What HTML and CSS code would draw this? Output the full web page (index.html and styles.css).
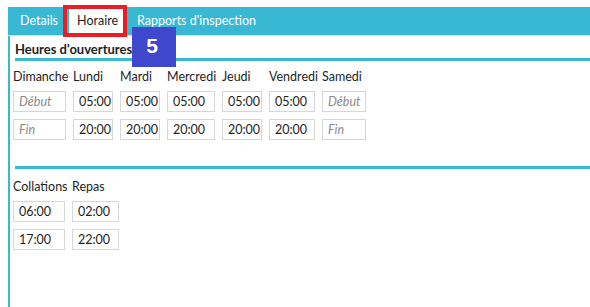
FILE: index.html
```html
<!DOCTYPE html>
<html lang="fr">
<head>
    <meta charset="UTF-8">
    <meta name="viewport" content="width=device-width, initial-scale=1.0">
    <title>Horaire</title>
    <link rel="stylesheet" href="styles.css">
</head>
<body>

    <div class="tabs">
        <div class="tab">Details</div>
        <div class="tab active">Horaire</div>
        <div class="tab">Rapports d'inspection</div>
    </div>

    <div class="panel">
        <div class="section-title">Heures d'ouvertures</div>
        <div class="rule"></div>

        <div class="week">
            <div class="day">Dimanche</div>
            <div class="day">Lundi</div>
            <div class="day">Mardi</div>
            <div class="day">Mercredi</div>
            <div class="day">Jeudi</div>
            <div class="day">Vendredi</div>
            <div class="day">Samedi</div>

            <input class="field" type="text" placeholder="Début">
            <input class="field" type="text" value="05:00">
            <input class="field" type="text" value="05:00">
            <input class="field" type="text" value="05:00">
            <input class="field" type="text" value="05:00">
            <input class="field" type="text" value="05:00">
            <input class="field" type="text" placeholder="Début">

            <input class="field" type="text" placeholder="Fin">
            <input class="field" type="text" value="20:00">
            <input class="field" type="text" value="20:00">
            <input class="field" type="text" value="20:00">
            <input class="field" type="text" value="20:00">
            <input class="field" type="text" value="20:00">
            <input class="field" type="text" placeholder="Fin">
        </div>

        <div class="rule rule-low"></div>

        <div class="meals">
            <div class="day">Collations</div>
            <div class="day">Repas</div>
            <input class="field" type="text" value="06:00">
            <input class="field" type="text" value="02:00">
            <input class="field" type="text" value="17:00">
            <input class="field" type="text" value="22:00">
        </div>
    </div>

    <!-- annotations over the screenshot -->
    <div class="highlight"></div>
    <div class="step">5</div>

</body>
</html>
```

FILE: styles.css
```css
body {
    margin: 0;
    background-color: #fff;
    font-family: 'Segoe UI', Lato, 'Open Sans', sans-serif;
    font-size: 12px;
    color: #1e1e1e;
    overflow: hidden;
}

.tabs {
    display: flex;
    align-items: flex-end;
    margin: 7px 0 0 8px;
    padding-left: 4px;
    height: 28px;
    background-color: #39b8d4;
    border-bottom: 1px solid #dcdcdc;
}

.tab {
    height: 24px;
    line-height: 24px;
    padding: 0 8px;
    margin-right: 3px;
    font-size: 12.5px;
    color: #fff;
    margin-bottom: 2px;
}

.tab.active {
    background-color: #fff;
    color: #1e1e1e;
    margin-bottom: 0;
    padding-bottom: 2px;
}

.panel {
    margin-left: 8px;
    height: 271px;
    border-left: 2px solid #39b8d4;
    padding-left: 3px;
}

.section-title {
    font-weight: bold;
    font-size: 13px;
    line-height: 16px;
    padding: 5px 0 0 2px;
}

.rule {
    height: 3px;
    margin: 1px 0 0 2px;
    background-color: #39b8d4;
}

.rule-low {
    margin-top: 26px;
}

.week {
    display: grid;
    grid-template-columns: 60px 47px 47px 55px 47px 53px 51px;
    row-gap: 7px;
    margin-top: 8px;
}

.meals {
    display: grid;
    grid-template-columns: 59px 54px;
    row-gap: 7px;
    margin-top: 10px;
}

.day {
    font-size: 12.5px;
    line-height: 16px;
    margin-bottom: -1px;
    white-space: nowrap;
}

.field {
    box-sizing: border-box;
    width: calc(100% - 7px);
    height: 21px;
    margin: 0;
    padding: 0 0 0 5px;
    border: 1px solid #d7d7d7;
    font-family: inherit;
    font-size: 12.5px;
    color: #1e1e1e;
    background-color: #fff;
    outline: none;
}

.field::placeholder {
    color: #8a8a8a;
    font-style: italic;
}

.highlight {
    position: absolute;
    left: 63px;
    top: 5px;
    width: 64px;
    height: 32px;
    box-sizing: border-box;
    border: 4px solid #ec1c24;
}

.step {
    position: absolute;
    left: 132px;
    top: 27px;
    width: 44px;
    height: 40px;
    background-color: #3f48cc;
    color: #fff;
    font-family: 'Liberation Sans', Arial, sans-serif;
    font-weight: bold;
    font-size: 21px;
    line-height: 38px;
    text-align: center;
    padding-right: 4px;
    box-sizing: border-box;
}
```
